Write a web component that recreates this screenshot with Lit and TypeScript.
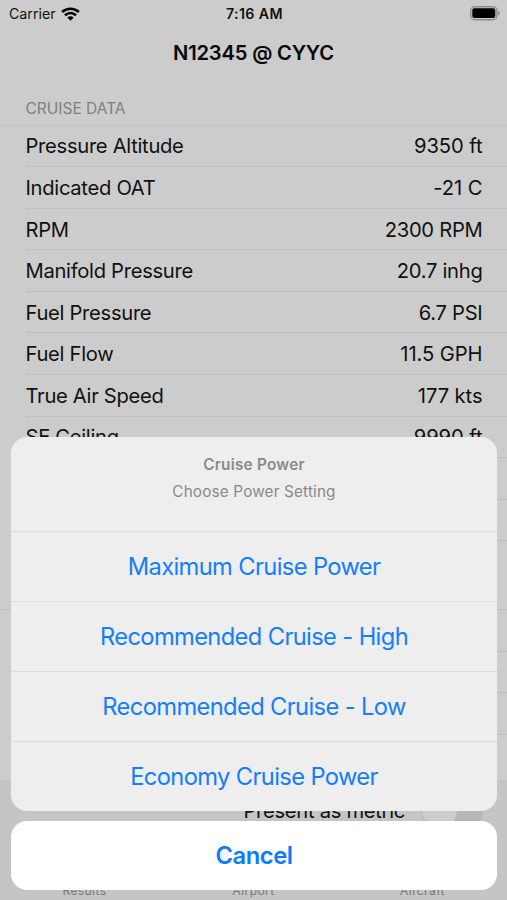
import { LitElement, html, css } from "lit";
import { customElement } from "lit/decorators.js";

const readings: [string, string][] = [
  ["Pressure Altitude", "9350 ft"],
  ["Indicated OAT", "-21 C"],
  ["RPM", "2300 RPM"],
  ["Manifold Pressure", "20.7 inhg"],
  ["Fuel Pressure", "6.7 PSI"],
  ["Fuel Flow", "11.5 GPH"],
  ["True Air Speed", "177 kts"],
  ["SE Ceiling", "9990 ft"],
];

const settings = [
  "Maximum Cruise Power",
  "Recommended Cruise - High",
  "Recommended Cruise - Low",
  "Economy Cruise Power",
];

@customElement("status-bar")
export class StatusBar extends LitElement {
  static styles = css`
    :host { display: grid; grid-template-columns: 1fr auto 1fr; align-items: center; height: 27px; padding: 0 7px 0 9px; font-size: 14.2px; }
    .carrier { display: flex; align-items: center; gap: 5px; }
    .time { font-weight: 600; letter-spacing: 0.4px; }
    .battery { justify-self: end; display: block; }
    svg { display: block; }
  `;
  render() {
    return html`
      <div class="carrier">
        <span>Carrier</span>
        <svg width="19" height="14" viewBox="0 0 19 14" fill="none" stroke="#000" stroke-width="2.6">
          <path d="M1.100 5C5.8.600 13.200.600 17.900 5" />
          <path d="M4 8.300C7.200 5.300 11.800 5.300 15 8.300" />
          <path d="M9.500 13.700L6.300 10.400Q9.500 7.900 12.700 10.400Z" fill="#000" stroke="none" />
        </svg>
      </div>
      <span class="time">7:16 AM</span>
      <svg class="battery" width="30" height="15" viewBox="0 0 30 15">
        <rect x=".7" y=".7" width="26.200" height="13" rx="4" fill="none" stroke="#8c8c8c" stroke-width="1.400" />
        <rect x="2.300" y="2.300" width="23" height="9.800" rx="2" />
        <path d="M28 5Q29.700 5.600 29.700 7.200T28 9.400Z" fill="#8c8c8c" />
      </svg>
    `;
  }
}

@customElement("action-sheet")
export class ActionSheet extends LitElement {
  static styles = css`
    :host { display: flex; flex-direction: column; gap: 10px; }
    .panel { background: #eee; border-radius: 16px; overflow: hidden; height: 374px; }
    .head { box-sizing: border-box; height: 94px; padding-top: 17px; text-align: center; color: #8a8a8a; font-size: 15.3px; line-height: 22px; }
    .title { font-weight: 600; margin-bottom: 5px; letter-spacing: 0.25px; }
    .sub { letter-spacing: 0.16px; }
    .action { box-sizing: border-box; height: 70px; border-top: 1px solid #dcdcdc; display: flex; align-items: center; justify-content: center; color: #147efb; font-size: 23.7px; letter-spacing: -0.62px; }
    .cancel { height: 69px; border-radius: 16px; background: #fff; display: flex; align-items: center; justify-content: center; color: #087cff; font-size: 23.7px; font-weight: 600; letter-spacing: -0.4px; }
  `;
  render() {
    return html`
      <div class="panel">
        <div class="head">
          <div class="title">Cruise Power</div>
          <div class="sub">Choose Power Setting</div>
        </div>
        ${settings.map((s) => html`<div class="action"><span>${s}</span></div>`)}
      </div>
      <div class="cancel"><span>Cancel</span></div>
    `;
  }
}

@customElement("app-root")
export class AppRoot extends LitElement {
  static styles = css`
    :host { display: block; position: relative; height: 900px; overflow: hidden; background: #ccc; color: #111; font-family: Inter, "Liberation Sans", sans-serif; }
    .page { display: flex; flex-direction: column; height: 900px; }
    .nav { height: 51px; display: flex; align-items: center; justify-content: center; font-size: 20.2px; font-weight: 600; letter-spacing: -0.2px; color: #080808; }
    .section { height: 46.7px; box-sizing: border-box; padding: 21px 25.5px 0; font-size: 15.5px; line-height: 20px; color: #808080; }
    .list { border-top: 1px solid #c0c0c0; }
    .row { height: 41.55px; box-sizing: border-box; margin-left: 25.5px; padding-right: 24.5px; border-bottom: 1px solid #c0c0c0; display: flex; justify-content: space-between; align-items: center; font-size: 20.2px; letter-spacing: -0.3px; }
    .value { letter-spacing: -0.08px; }
    .row:nth-child(3) .value, .row:nth-child(4) .value, .row:nth-child(5) .value { letter-spacing: -0.28px; }
    .gap { height: 69px; box-sizing: border-box; border-bottom: 1px solid #c0c0c0; }
    .footer { margin-top: auto; height: 120px; box-sizing: border-box; background: #c5c5c5; display: flex; flex-direction: column; justify-content: space-between; }
    .metric { display: flex; justify-content: flex-end; align-items: center; height: 60px; gap: 16px; padding-right: 24px; font-size: 20.2px; letter-spacing: -0.3px; }
    .switch { box-sizing: border-box; width: 62px; height: 38px; padding: 1px; border-radius: 19px; background: #b7b7b7; }
    .knob { width: 35px; height: 36px; border-radius: 50%; background: #ccc; }
    .tabs { display: grid; grid-template-columns: repeat(3, 1fr); text-align: center; font-size: 12px; line-height: 18px; letter-spacing: 0.4px; color: #777; }
    .sheet { position: absolute; left: 11px; right: 10px; bottom: 10px; }
  `;
  render() {
    return html`
      <div class="page">
        <status-bar></status-bar>
        <div class="nav">N12345 @ CYYC</div>
        <div class="section">CRUISE DATA</div>
        <div class="list">
          ${readings.map(([k, v]) => html`<div class="row"><span>${k}</span><span class="value">${v}</span></div>`)}
          <div class="row"></div>
          <div class="row"></div>
        </div>
        <div class="gap"></div>
        <div class="row"></div>
        <div class="row"></div>
        <div class="row"></div>
        <div class="footer">
          <div class="metric"><span>Present as metric</span><div class="switch"><div class="knob"></div></div></div>
          <div class="tabs"><span>Results</span><span>Airport</span><span>Aircraft</span></div>
        </div>
      </div>
      <action-sheet class="sheet"></action-sheet>
    `;
  }
}
